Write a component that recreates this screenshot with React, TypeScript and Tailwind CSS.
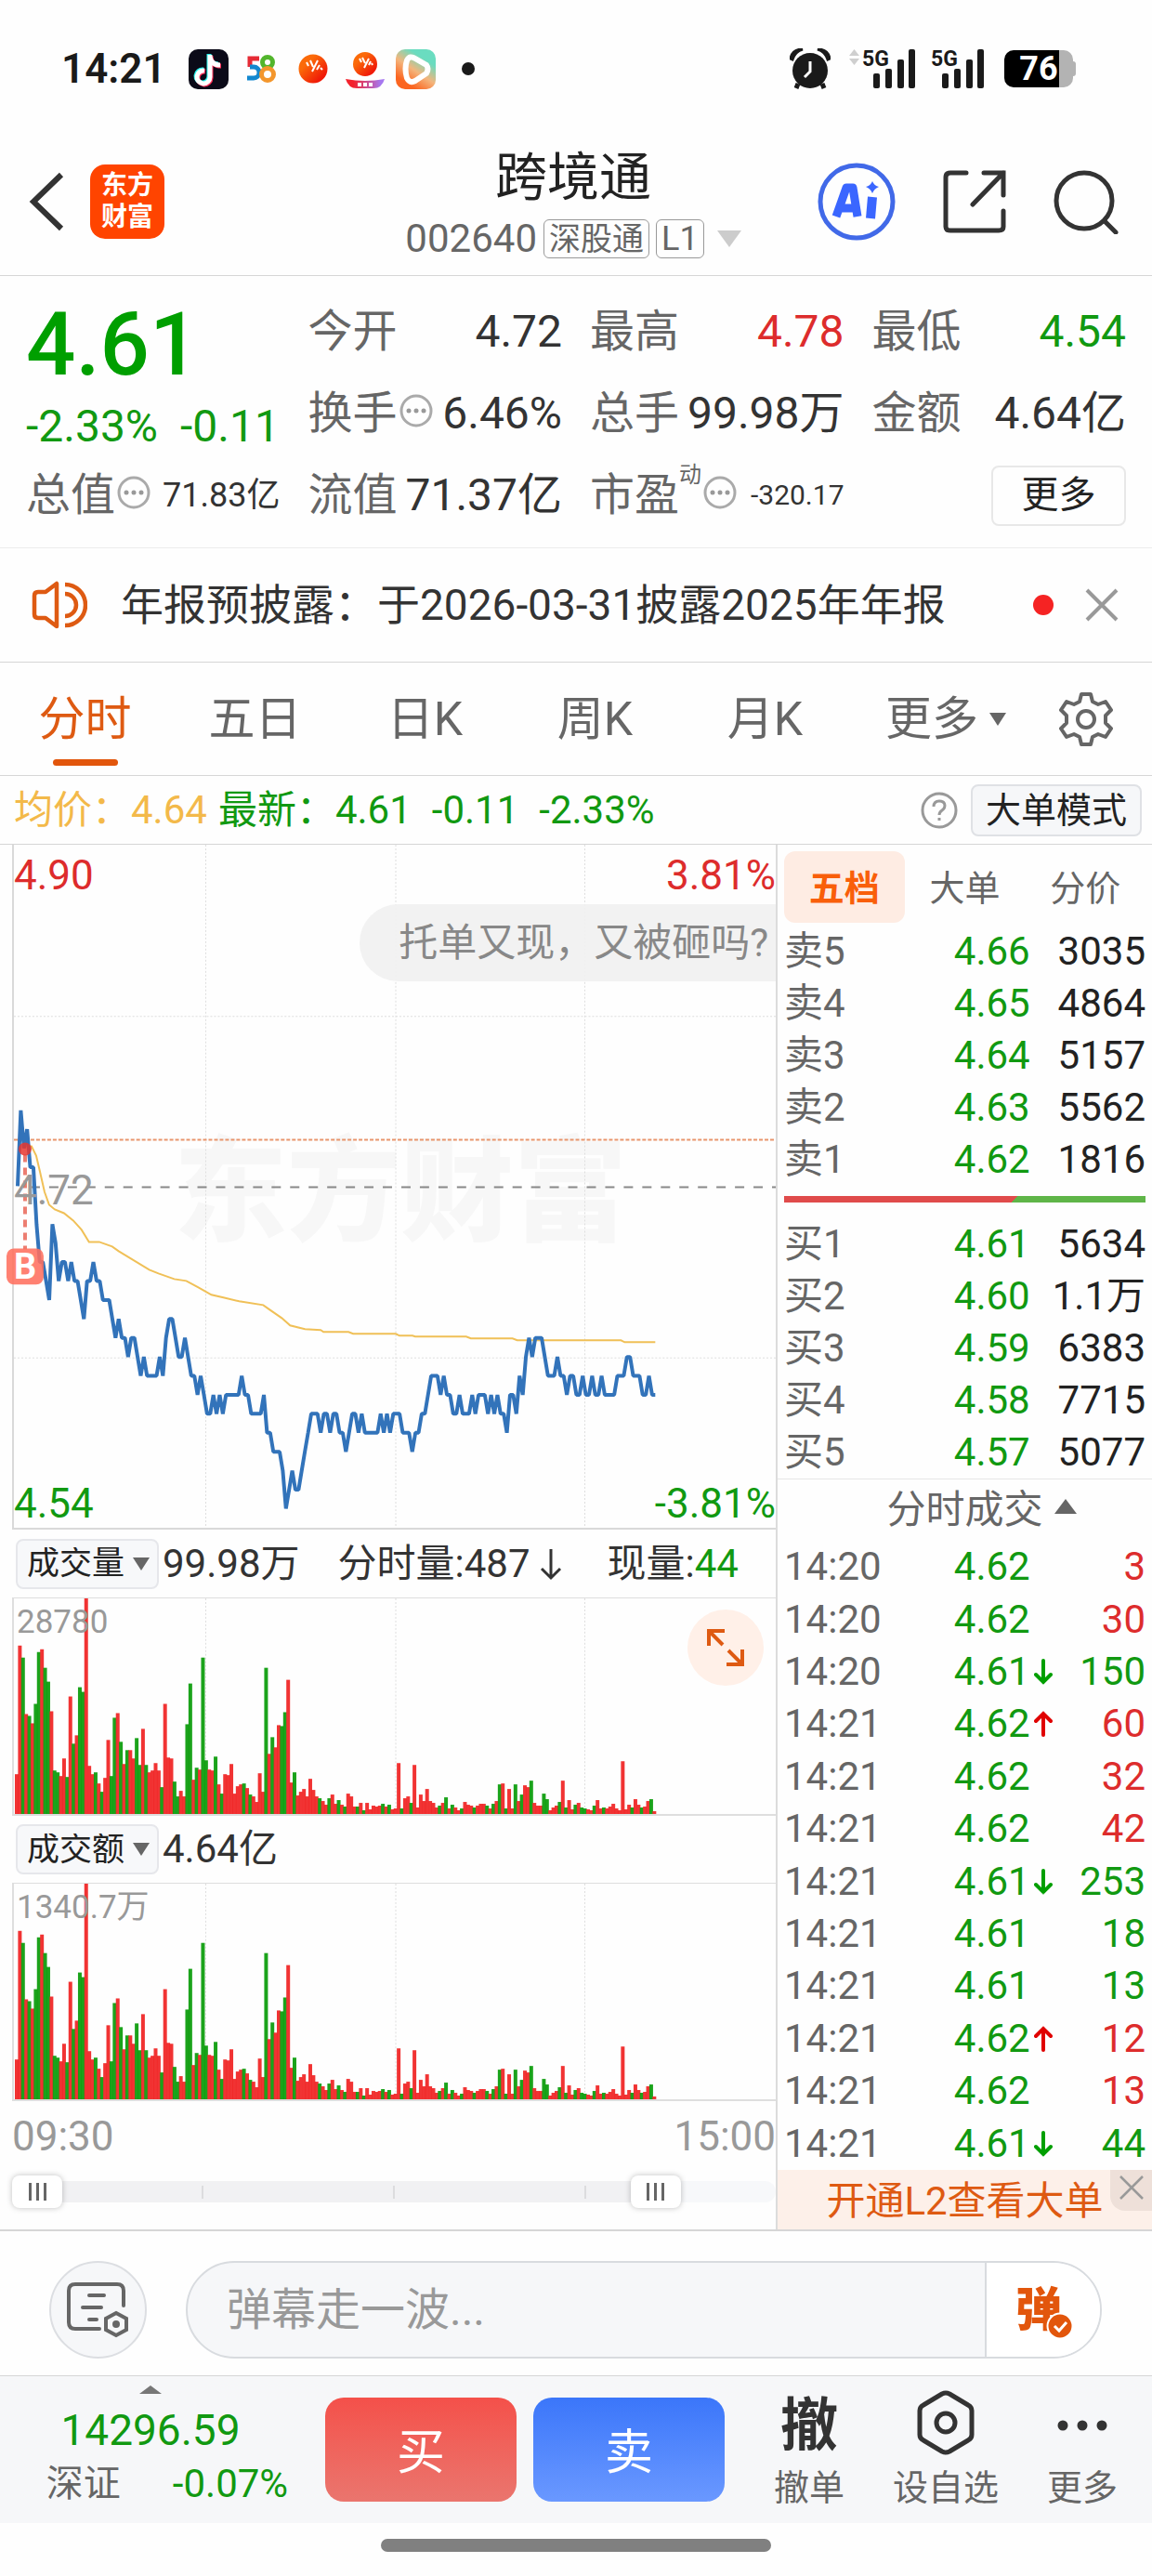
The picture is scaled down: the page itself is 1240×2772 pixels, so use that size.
import { useState } from "react";
import clsx from "clsx";

// price per minute, in cents above 4.50
const PRICES = [
  22, 26, 24, 25, 23, 23, 20, 18, 18, 17, 16, 20, 19, 17, 18, 18, 17, 18, 17, 17,
  16, 15, 17, 17, 18, 17, 17, 16, 16, 16, 15, 14, 15, 14, 14, 13, 14, 14, 13, 12,
  13, 12, 12, 12, 12, 13, 12, 14, 15, 15, 14, 13, 13, 14, 13, 12, 12, 11, 12, 11,
  10, 10, 11, 10, 11, 10, 11, 11, 11, 11, 11, 12, 11, 11, 10, 10, 10, 10, 11, 9,
  9, 8, 8, 8, 7, 5, 6, 7, 6, 6, 7, 8, 9, 10, 10, 10, 9, 10, 10, 9,
  10, 10, 9, 9, 8, 9, 10, 10, 9, 10, 9, 9, 9, 9, 9, 10, 9, 10, 9, 10,
  10, 10, 9, 9, 9, 8, 9, 9, 10, 10, 11, 12, 12, 12, 11, 12, 11, 11, 10, 10,
  11, 10, 10, 10, 11, 10, 11, 11, 11, 10, 11, 10, 11, 10, 10, 9, 11, 11, 10, 12,
  11, 13, 14, 13, 14, 14, 14, 13, 12, 12, 12, 13, 12, 12, 11, 12, 12, 11, 11, 12,
  11, 11, 12, 11, 11, 12, 11, 11, 11, 11, 12, 12, 12, 13, 13, 12, 12, 12, 11, 11,
  12, 11, 11,
];

// volume per minute, negative = sell side
const VOLUMES = [
  43, 182, -169, 108, -106, 98, -119, -175, 178, -158, -143, 111, -47, -45, 41, 60, -40, 127, -76, 85,
  -137, -132, 233, 52, 43, -45, 33, -24, 39, 80, -41, -104, 109, -78, 54, -69, 69, 60, -82, -53,
  92, -53, 45, 47, 55, 47, -29, 119, 61, 60, -35, -19, 25, 19, -97, -141, 37, -50, 48, -169,
  -58, 48, 47, -62, 32, -22, 43, 42, 54, 22, 30, 32, -33, 28, -21, 19, 13, 44, 24, -158,
  65, -83, 72, 96, -95, -110, 145, 34, -45, 20, 24, 27, 19, 38, 26, 19, -17, 14, 10, -17,
  21, 11, -15, 10, -8, 22, 19, 8, -8, 12, -4, 12, 5, 9, 8, 9, -11, 8, -10, 5,
  6, 55, -6, 17, 19, -12, 53, 7, 21, 14, 27, 14, 12, 7, -9, 12, -18, 6, -10, 7,
  4, -6, 13, 10, 9, -7, 9, 11, 11, -9, 6, -11, 14, -32, 33, -6, 27, 6, -32, 14,
  -21, 31, 29, -36, 12, 9, 9, -22, -16, 4, 7, 9, -13, 36, -7, 15, 5, -10, 12, -7,
  -6, 5, 4, -9, 15, 6, -7, 6, 8, 11, 6, 4, 57, 5, 10, -7, 16, 10, -7, 8,
  14, -16, 3,
];

const AVERAGE =
  "12,325 19,325 24,335 28,352 33,374 38,388 44,393 54,397 64,405 73,415 81,428 92,428 106,433 113,438 146,458 156,462 173,468 186,470 199,477 213,485 226,488 243,492 269,496 276,501 289,510 298,518 314,522 331,523 334,525 361,525 366,527 412,527 416,529 430,529 433,530 488,530 493,532 538,532 543,534 655,534 659,536 692,536";

const STEP = 3.406;

const SELLS = [
  ["卖5", "4.66", "3035"],
  ["卖4", "4.65", "4864"],
  ["卖3", "4.64", "5157"],
  ["卖2", "4.63", "5562"],
  ["卖1", "4.62", "1816"],
];

const BUYS = [
  ["买1", "4.61", "5634"],
  ["买2", "4.60", "1.1万"],
  ["买3", "4.59", "6383"],
  ["买4", "4.58", "7715"],
  ["买5", "4.57", "5077"],
];

type Trade = { time: string; price: string; dir?: "up" | "down"; qty: string; buy: boolean };

const TRADES: Trade[] = [
  { time: "14:20", price: "4.62", qty: "3", buy: true },
  { time: "14:20", price: "4.62", qty: "30", buy: true },
  { time: "14:20", price: "4.61", dir: "down", qty: "150", buy: false },
  { time: "14:21", price: "4.62", dir: "up", qty: "60", buy: true },
  { time: "14:21", price: "4.62", qty: "32", buy: true },
  { time: "14:21", price: "4.62", qty: "42", buy: true },
  { time: "14:21", price: "4.61", dir: "down", qty: "253", buy: false },
  { time: "14:21", price: "4.61", qty: "18", buy: false },
  { time: "14:21", price: "4.61", qty: "13", buy: false },
  { time: "14:21", price: "4.62", dir: "up", qty: "12", buy: true },
  { time: "14:21", price: "4.62", qty: "13", buy: true },
  { time: "14:21", price: "4.61", dir: "down", qty: "44", buy: false },
];

const TABS = ["分时", "五日", "日K", "周K", "月K"];

function Signal({ arrows }: { arrows?: boolean }) {
  return (
    <svg viewBox="0 0 72 52" className="h-[52px] w-[72px] overflow-visible" fill="#1a1a1a">
      {arrows && (
        <g fill="#cfcfcf">
          <path d="M0 12 L5.5 5 L11 12z" />
          <path d="M0 15 L11 15 L5.5 22z" />
        </g>
      )}
      <text x="14" y="23" fontSize="23" fontWeight="700" fontFamily="Roboto">5G</text>
      <rect x="26" y="31" width="7" height="16" rx="2" />
      <rect x="39" y="26" width="7" height="21" rx="2" />
      <rect x="52" y="16" width="7" height="31" rx="2" />
      <rect x="64" y="5" width="7" height="42" rx="2" />
    </svg>
  );
}

function StatusBar() {
  return (
    <div className="flex h-[148px] items-center justify-between pr-[82px] pl-[66px]">
      <div className="flex items-center">
        <span className="mr-6 text-[44px] leading-none font-semibold text-[#1a1a1a]">14:21</span>
        <svg viewBox="0 0 43 43" className="mr-[19px] size-[43px]">
          <rect width="43" height="43" rx="10" fill="#0b0a18" />
          <g fill="none" strokeWidth="5">
            <path d="M22 5v24a7 7 0 1 1-6-7M22 7c1 6 5 9 10 9" stroke="#25f4ee" />
            <path d="M24 7v24a7 7 0 1 1-6-7M24 9c1 6 5 9 11 9" stroke="#fe2c55" />
            <path d="M23 6v24a7 7 0 1 1-6-7M23 8c1 6 5 9 11 9" stroke="#fff" />
          </g>
        </svg>
        <svg viewBox="0 0 32 30" className="mr-6 h-[30px] w-8" fill="none" strokeWidth="5">
          <path d="M14 4H4v9" stroke="#e62b35" />
          <path d="M4 13h4a6 6 0 0 1 0 12H1" stroke="#1287cf" />
          <circle cx="23" cy="8" r="5.5" stroke="#52b52c" />
          <circle cx="23" cy="21" r="6.5" stroke="#f3962c" />
        </svg>
        <svg viewBox="0 0 32 32" className="mr-[19px] size-8">
          <defs>
            <linearGradient id="ball" x1="0" y1="0" x2="1" y2="1">
              <stop offset="0.3" stopColor="#fb6a09" />
              <stop offset="0.8" stopColor="#f01a08" />
            </linearGradient>
          </defs>
          <circle cx="16" cy="16" r="15.5" fill="url(#ball)" />
          <path d="M9 9l2 4M13 7l3 7M15 19l6-12M20 17l3-5M24 15l2 2" stroke="#fff" strokeWidth="2" />
        </svg>
        <svg viewBox="0 0 42 42" className="mr-3 size-[42px]">
          <defs>
            <linearGradient id="ribbon">
              <stop offset="0.2" stopColor="#f3222d" />
              <stop offset="0.9" stopColor="#a678f0" />
            </linearGradient>
          </defs>
          <circle cx="21" cy="16" r="13" fill="url(#ball)" />
          <path d="M15 10l2 4M18 9l3 6M20 20l5-10M25 17l2-4M28 15l1 2" stroke="#fff" strokeWidth="2" />
          <path d="M0 32q21 4 42 0q-3 10-12 10H12Q3 42 0 32z" fill="url(#ribbon)" />
          <path d="M13 38h16" stroke="#fff" strokeWidth="4" strokeDasharray="4 2" />
        </svg>
        <svg viewBox="0 0 43 43" className="mr-7 size-[43px]">
          <defs>
            <linearGradient id="play" x1="0.9" y1="0.1" x2="0.3" y2="1">
              <stop offset="0.2" stopColor="#6adcc0" />
              <stop offset="0.55" stopColor="#f4b57c" />
              <stop offset="0.9" stopColor="#fb6520" />
            </linearGradient>
          </defs>
          <rect width="43" height="43" rx="10" fill="url(#play)" />
          <path d="M12 12Q15 6 21 10L33 17Q36 21 33 26L21 34Q15 37 12 31Q9 21 12 12z" fill="none" stroke="#fff" strokeWidth="6" />
        </svg>
        <span className="size-3.5 rounded-full bg-[#1a1a1a]" />
      </div>
      <div className="flex items-center">
        <svg viewBox="0 0 44 44" className="mr-5 size-11" fill="#1a1a1a">
          <circle cx="22" cy="24" r="19" />
          <path d="M1 11Q3 1 14 1Q6 3 3 12zM43 11Q41 1 30 1Q38 3 41 12z" stroke="#1a1a1a" strokeWidth="3" />
          <path d="M9 38l-2 5M35 38l2 5" stroke="#1a1a1a" strokeWidth="5" />
          <path d="M22 14v11l-6 6" fill="none" stroke="#fff" strokeWidth="3" />
        </svg>
        <div className="flex items-center gap-0.5">
          <Signal arrows />
          <Signal />
        </div>
        <div className="ml-[21px] flex items-center">
          <div className="flex h-10 w-[74px] items-center justify-center overflow-hidden rounded-[10px] bg-[linear-gradient(90deg,#000_80%,#b3b3b3_80%)] text-[36px] leading-none font-bold text-white">
            76
          </div>
          <span className="h-4 w-[3px] rounded-r bg-[#b3b3b3]" />
        </div>
      </div>
    </div>
  );
}

function Header() {
  return (
    <header className="grid h-[149px] grid-cols-[1fr_auto_1fr] items-center border-b border-[#d6d6d6] pr-9 pb-2.5 pl-[30px]">
      <div className="flex items-center gap-7">
        <button aria-label="返回">
          <svg viewBox="0 0 39 64" className="h-16 w-[39px]" fill="none" stroke="#333" strokeWidth="6">
            <path d="M36 3L6 32l30 29" />
          </svg>
        </button>
        <a href="#home" className="flex size-20 flex-col items-center justify-center rounded-2xl bg-[#ff4400] text-[28px] leading-[34px] font-bold text-white">
          <span>东方</span>
          <span>财富</span>
        </a>
      </div>
      <div className="flex flex-col items-center gap-2.5">
        <h1 className="text-[56px] leading-[70px] text-[#222]">跨境通</h1>
        <div className="flex items-center text-[#666]">
          <span className="mr-[7px] text-[42px] leading-none">002640</span>
          <span className="mr-[7px] rounded-md border border-[#999] px-[5px] text-[34px] leading-10">深股通</span>
          <span className="rounded-md border border-[#999] px-[5px] text-[36px] leading-10">L1</span>
          <button aria-label="切换股票" className="ml-3.5">
            <svg viewBox="0 0 26 18" className="h-[18px] w-[26px]" fill="#ccc">
              <path d="M0 0h26L13 18z" />
            </svg>
          </button>
        </div>
      </div>
      <div className="flex items-center justify-end gap-[51px]">
        <button aria-label="AI">
          <svg viewBox="0 0 84 84" className="size-[84px]">
            <circle cx="42" cy="42" r="39" fill="none" stroke="#4169e8" strokeWidth="5" />
            <g fill="none" stroke="#3a66ff" strokeWidth="9" strokeLinejoin="round">
              <path d="M20 58L31 27h7l5 31M26 49h14" />
              <path d="M59 37l-2 23" strokeWidth="10" />
            </g>
            <path d="M59 20q2 5 7 6q-5 2-7 7q-2-5-7-7q5-1 7-6z" fill="#3a66ff" />
          </svg>
        </button>
        <button aria-label="分享">
          <svg viewBox="0 0 68 68" className="size-[68px]" fill="none" stroke="#333" strokeWidth="5" strokeLinecap="round">
            <path d="M25 3H8Q3 3 3 8v53q0 4 5 4h52q5 0 5-4V44M44 3h21v24M65 3L32 37" />
          </svg>
        </button>
        <button aria-label="搜索">
          <svg viewBox="0 0 70 70" className="size-[70px]" fill="none" stroke="#333" strokeWidth="5" strokeLinecap="round">
            <circle cx="33" cy="34" r="30" />
            <path d="M55 56l12 12" />
          </svg>
        </button>
      </div>
    </header>
  );
}

function Dots() {
  return (
    <svg viewBox="0 0 36 36" className="mb-1.5 size-9 shrink-0" fill="#999">
      <circle cx="18" cy="18" r="16" fill="none" stroke="#aaa" strokeWidth="3" />
      <circle cx="10" cy="18" r="2.5" />
      <circle cx="18" cy="18" r="2.5" />
      <circle cx="26" cy="18" r="2.5" />
    </svg>
  );
}

function Quote({ label, value, dots, color = "text-[#333]", small }: {
  label: string;
  value: string;
  dots?: boolean;
  color?: string;
  small?: boolean;
}) {
  return (
    <div className="flex h-[88px] items-center justify-between whitespace-nowrap">
      <span className="flex items-center gap-0.5 text-[48px] leading-none text-[#666]">
        {label}
        {dots && <Dots />}
      </span>
      <span className={clsx("leading-none", small ? "text-[36px]" : "text-[48px]", color)}>{value}</span>
    </div>
  );
}

function QuotePanel() {
  return (
    <section className="grid h-[293px] grid-cols-4 gap-x-[30px] border-b border-[#ececec] px-7 pt-4">
      <div>
        <div className="flex h-[116px] items-center text-[94px] leading-none font-medium text-[#009f00]">4.61</div>
        <div className="flex h-[60px] items-center gap-6 text-[48px] leading-none text-[#119911]">
          <span>-2.33%</span>
          <span>-0.11</span>
        </div>
        <Quote label="总值" value="71.83亿" dots small />
      </div>
      <div>
        <Quote label="今开" value="4.72" />
        <Quote label="换手" value="6.46%" dots />
        <Quote label="流值" value="71.37亿" />
      </div>
      <div>
        <Quote label="最高" value="4.78" color="text-[#dd2c2c]" />
        <Quote label="总手" value="99.98万" />
        <div className="flex h-[88px] items-center justify-between">
          <span className="flex items-center text-[48px] leading-none text-[#666]">
            市盈
            <span className="mr-0.5 mb-11 text-[24px] leading-none">动</span>
            <Dots />
          </span>
          <span className="text-[30px] leading-none text-[#333]">-320.17</span>
        </div>
      </div>
      <div>
        <Quote label="最低" value="4.54" color="text-[#119911]" />
        <Quote label="金额" value="4.64亿" />
        <div className="flex h-[88px] items-center justify-end">
          <button className="h-[65px] w-[145px] rounded-lg border-2 border-[#e8e8e8] text-[40px] leading-none text-[#222]">更多</button>
        </div>
      </div>
    </section>
  );
}

function Notice() {
  return (
    <div className="flex h-[123px] items-center border-b border-[#d6d6d6] pr-9 pl-[34px]">
      <svg viewBox="0 0 60 54" className="mr-9 h-[54px] w-[60px]" fill="none" stroke="#de5a12" strokeWidth="4.5" strokeLinejoin="round">
        <path d="M27 4v46L15 41H7q-4 0-4-4V17q0-4 4-4h8z" />
        <path d="M36 5a22 22 0 0 1 0 44M36 15a12 12 0 0 1 0 24" />
      </svg>
      <p className="flex-1 text-[46px] leading-none whitespace-nowrap text-[#333]">年报预披露：于2026-03-31披露2025年年报</p>
      <span className="mr-[34px] size-[22px] rounded-full bg-[#f52323]" />
      <button aria-label="关闭">
        <svg viewBox="0 0 36 36" className="size-9" fill="none" stroke="#999" strokeWidth="4">
          <path d="M2 2l32 32M34 2L2 34" />
        </svg>
      </button>
    </div>
  );
}

function PeriodTabs() {
  const [active, setActive] = useState("分时");

  return (
    <nav className="grid h-[122px] grid-cols-[183fr_183fr_183fr_183fr_183fr_206fr_95fr] items-stretch border-b border-[#d6d6d6] pr-6 text-[50px] leading-none text-[#666]">
      {TABS.map((tab) => (
        <button
          key={tab}
          onClick={() => setActive(tab)}
          className={clsx("relative", active === tab && "text-[#de5a12]")}
        >
          {tab}
          {active === tab && <span className="absolute bottom-2.5 left-1/2 h-[7px] w-[70px] -translate-x-1/2 rounded-full bg-[#e2560c]" />}
        </button>
      ))}
      <button className="flex items-center justify-center gap-3">
        更多
        <svg viewBox="0 0 18 14" className="h-3.5 w-[18px]" fill="#666">
          <path d="M0 0h18L9 14z" />
        </svg>
      </button>
      <button aria-label="设置" className="flex items-center justify-center">
        <svg viewBox="0 0 60 60" className="size-[60px]" fill="none" stroke="#666" strokeWidth="4" strokeLinejoin="round">
          <path d="M25 3h10l2 8l6 3l8-3l6 9l-6 6v8l6 6l-6 9l-8-3l-6 3l-2 8H25l-2-8l-6-3l-8 3l-6-9l6-6v-8l-6-6l6-9l8 3l6-3z" />
          <circle cx="30" cy="30" r="9" />
        </svg>
      </button>
    </nav>
  );
}

function InfoRow() {
  return (
    <div className="flex h-[74px] items-center border-b border-[#d6d6d6] pr-[11px] pl-[15px] text-[42px] leading-none whitespace-nowrap text-[#119911]">
      <span className="mr-3 text-[#f3b94a]">均价：4.64</span>
      <span className="mr-[22px]">最新：4.61</span>
      <span className="mr-[22px]">-0.11</span>
      <span>-2.33%</span>
      <button aria-label="帮助" className="mr-[14px] ml-auto">
        <svg viewBox="0 0 40 40" className="size-10" fill="none" stroke="#999" strokeWidth="3">
          <circle cx="20" cy="20" r="18" />
          <path d="M14 16q0-6 6-6t6 5q0 3-3 5t-3 5M20 28v3" />
        </svg>
      </button>
      <button className="h-14 rounded-lg border-2 border-[#dfe1e5] bg-[#f6f7f9] px-[14px] text-[38px] leading-none text-[#222]">大单模式</button>
    </div>
  );
}

function PriceChart() {
  const points = PRICES.map((p, i) => `${(4 + i * STEP).toFixed(1)},${((40 - p) * 20.44).toFixed(1)}`).join(" ");

  return (
    <div className="relative h-[737px] border-b-2 border-l-2 border-[#d9d9d9] text-[44px] leading-none">
      <span className="absolute top-[314px] left-[172px] text-[122px] leading-none font-black whitespace-nowrap text-[#f7f7f7]">东方财富</span>
      <svg viewBox="0 0 822 736" preserveAspectRatio="none" className="absolute inset-0 h-full w-full overflow-visible" fill="none">
        <g stroke="#dedede" strokeWidth="1" strokeDasharray="2 2">
          <path d="M207 0v736M412 0v736M616 0v736M0 185h822M0 553h822" />
        </g>
        <path d="M0 318h822" stroke="#e8956c" strokeWidth="2" strokeDasharray="4 2" />
        <path d="M18 369h804" stroke="#888" strokeWidth="2" strokeDasharray="10 10" />
        <polyline points={AVERAGE} stroke="#f0c057" strokeWidth="2" />
        <polyline points={points} stroke="#3273ba" strokeWidth="4" strokeLinejoin="bevel" />
        <path d="M12 334v102" stroke="#ec7d70" strokeWidth="4" strokeDasharray="8 6" />
        <circle cx="12" cy="328" r="7" fill="#e5362f" fillOpacity="0.85" />
        <rect x="-8" y="435" width="40" height="39" rx="8" fill="#ff6f5f" fillOpacity="0.88" />
        <text x="12" y="468" fontSize="38" fontWeight="700" textAnchor="middle" fill="#fff" fontFamily="Roboto">B</text>
      </svg>
      <span className="absolute top-[11px] left-0 text-[#dd2c2c]">4.90</span>
      <span className="absolute top-[11px] right-0 text-[#dd2c2c]">3.81%</span>
      <span className="absolute top-[350px] left-0 text-[#999]">4.72</span>
      <span className="absolute bottom-1 left-0 text-[#119911]">4.54</span>
      <span className="absolute right-0 bottom-1 text-[#119911]">-3.81%</span>
      <div className="absolute top-16 right-0 flex h-[83px] items-center rounded-l-full bg-[#f1f1f1]/90 pr-2 pl-[42px] text-[42px] leading-none whitespace-nowrap text-[#888]">
        托单又现，又被砸吗?
      </div>
    </div>
  );
}

function BarChart({ max, children }: { max: string; children?: React.ReactNode }) {
  return (
    <div className="relative h-[235px] border-t border-b-2 border-l-2 border-[#dedede]">
      <svg viewBox="0 0 822 233" preserveAspectRatio="none" className="absolute inset-0 h-full w-full">
        <path d="M207 0v233M412 0v233M616 0v233" stroke="#dedede" strokeDasharray="2 2" />
        {VOLUMES.map((v, i) => (
          <rect
            key={i}
            x={1 + i * STEP}
            y={233 - Math.abs(v)}
            width="4"
            height={Math.abs(v)}
            fill={v > 0 ? "#f02222" : "#089b08"}
            fillOpacity="0.92"
          />
        ))}
      </svg>
      <span className="absolute top-2 left-[3px] text-[35px] leading-none text-[#999]">{max}</span>
      {children}
    </div>
  );
}

function IndicatorSelect({ name }: { name: string }) {
  return (
    <label className="relative ml-1 flex items-center">
      <select
        aria-label="指标"
        defaultValue={name}
        className="h-[54px] w-[154px] appearance-none rounded-lg border-2 border-[#e6e7eb] bg-[#f7f8fa] pl-2.5 text-[35px] leading-none text-[#222]"
      >
        <option>{name}</option>
      </select>
      <svg viewBox="0 0 18 14" className="pointer-events-none absolute right-2.5 h-3.5 w-[18px]" fill="#666">
        <path d="M0 0h18L9 14z" />
      </svg>
    </label>
  );
}

const RANGE =
  "pointer-events-none absolute inset-0 h-full w-full appearance-none bg-transparent [&::-webkit-slider-thumb]:pointer-events-auto [&::-webkit-slider-thumb]:h-[35px] [&::-webkit-slider-thumb]:w-[54px] [&::-webkit-slider-thumb]:appearance-none [&::-webkit-slider-thumb]:rounded-lg [&::-webkit-slider-thumb]:bg-white [&::-webkit-slider-thumb]:bg-[linear-gradient(90deg,#666_3px,transparent_3px_8px,#666_8px_11px,transparent_11px_16px,#666_16px)] [&::-webkit-slider-thumb]:bg-[length:19px_19px] [&::-webkit-slider-thumb]:bg-center [&::-webkit-slider-thumb]:bg-no-repeat [&::-webkit-slider-thumb]:shadow-[0_0_6px_rgba(0,0,0,0.25)]";

function TimeRange() {
  return (
    <div className="relative h-[35px]">
      <div className="absolute inset-x-0 top-1.5 flex h-[23px] items-center justify-evenly rounded-full bg-[linear-gradient(90deg,#f1f1f3_84%,#f7f8fa_84%)]">
        <span className="h-3.5 w-0.5 bg-[#dcdcde]" />
        <span className="h-3.5 w-0.5 bg-[#dcdcde]" />
        <span className="h-3.5 w-0.5 bg-[#dcdcde]" />
      </div>
      <input type="range" aria-label="开始时间" min={0} max={1000} defaultValue={0} className={RANGE} />
      <input type="range" aria-label="结束时间" min={0} max={1000} defaultValue={867} className={RANGE} />
    </div>
  );
}

function Charts() {
  return (
    <div className="min-w-0 flex-1 border-r-2 border-[#dcdcdc] pl-[13px]">
      <PriceChart />
      <div className="flex h-[73px] items-center text-[42px] leading-none whitespace-nowrap text-[#333]">
        <IndicatorSelect name="成交量" />
        <span className="ml-1">99.98万</span>
        <span className="ml-[41px]">分时量:487</span>
        <svg viewBox="0 0 24 36" className="ml-2.5 h-9 w-6" fill="none" stroke="#333" strokeWidth="3">
          <path d="M12 2v31M2 23l10 10l10-10" />
        </svg>
        <span className="ml-[49px]">
          现量:<span className="text-[#119911]">44</span>
        </span>
      </div>
      <BarChart max="28780">
        <button aria-label="全屏" className="absolute top-3 right-[13px] flex size-[82px] items-center justify-center rounded-full bg-[#fff0e8]">
          <svg viewBox="0 0 40 40" className="size-10" fill="none" stroke="#de5a12" strokeWidth="4">
            <path d="M2 18V2h17M2 2l15 15M38 22v16H21M38 38L23 23" />
          </svg>
        </button>
      </BarChart>
      <div className="flex h-[72px] items-center text-[42px] leading-none text-[#333]">
        <IndicatorSelect name="成交额" />
        <span className="ml-1">4.64亿</span>
      </div>
      <BarChart max="1340.7万" />
      <div className="flex h-20 items-center justify-between pb-1 text-[44px] leading-none text-[#999]">
        <span>09:30</span>
        <span>15:00</span>
      </div>
      <TimeRange />
    </div>
  );
}

function Depth({ rows }: { rows: string[][] }) {
  return (
    <table className="w-full table-fixed text-[42px] leading-none">
      <tbody>
        {rows.map(([label, price, qty]) => (
          <tr key={label} className="h-14">
            <th scope="row" className="w-[47%] p-0 text-left font-normal text-[#666]">{label}</th>
            <td className="w-[22%] p-0 text-[#119911]">{price}</td>
            <td className="p-0 text-right text-[#222]">{qty}</td>
          </tr>
        ))}
      </tbody>
    </table>
  );
}

function OrderBook() {
  return (
    <aside className="flex w-[32.5%] flex-col">
      <div className="grid grid-cols-3 px-[7px] pt-[7px] text-[38px] leading-none text-[#666]">
        <button className="h-[77px] rounded-xl bg-[#feece3] pt-0.5 font-bold text-[#f95f0a]">五档</button>
        <button className="pt-0.5">大单</button>
        <button className="pt-0.5">分价</button>
      </div>
      <div className="px-[7px] pt-[3px]">
        <Depth rows={SELLS} />
        <div className="mt-[11px] mb-[17px] h-[7px] bg-[linear-gradient(135deg,#e04b4b_63.5%,#5fb548_63.5%)]" />
        <Depth rows={BUYS} />
      </div>
      <button className="flex h-[67px] items-center justify-center gap-3 border-t border-[#e6e6e6] pl-9 text-[42px] leading-none text-[#666]">
        分时成交
        <svg viewBox="0 0 24 16" className="mb-2 h-4 w-6" fill="#666">
          <path d="M0 16h24L12 0z" />
        </svg>
      </button>
      <table className="mx-[7px] h-[677px] table-fixed text-[42px] leading-none">
        <tbody>
          {TRADES.map((t, i) => (
            <tr key={i} className="h-14">
              <td className="w-[47%] p-0 text-[#666]">{t.time}</td>
              <td className="w-[28%] p-0 text-[#119911]">
                <span className="flex items-center gap-1">
                  {t.price}
                  {t.dir && (
                    <svg
                      viewBox="0 0 20 28"
                      className="h-7 w-5"
                      fill="none"
                      stroke={t.dir === "up" ? "#e00000" : "#009f00"}
                      strokeWidth="4"
                      strokeLinecap="round"
                    >
                      <path d={t.dir === "up" ? "M10 26V3M2 11l8-8l8 8" : "M10 2v23M2 17l8 8l8-8"} />
                    </svg>
                  )}
                </span>
              </td>
              <td className={clsx("p-0 text-right", t.buy ? "text-[#dd2c2c]" : "text-[#119911]")}>{t.qty}</td>
            </tr>
          ))}
        </tbody>
      </table>
      <div className="relative flex flex-1 items-center justify-center bg-[#fdf0e9]">
        <a href="#l2" className="pt-1 text-[42px] leading-[60px] text-[#de5a12]">开通L2查看大单</a>
        <button aria-label="关闭广告" className="absolute top-0 right-0 flex h-11 w-[45px] items-start justify-center rounded-bl-2xl bg-[#eee0d9] pt-1.5">
          <svg viewBox="0 0 26 26" className="size-[26px]" fill="none" stroke="#999" strokeWidth="2.5">
            <path d="M1 1l24 24M25 1L1 25" />
          </svg>
        </button>
      </div>
    </aside>
  );
}

function CommentBar() {
  return (
    <div className="flex h-[156px] items-center gap-[42px] border-b border-[#d6d6d6] pt-3.5 pr-[54px] pl-[53px]">
      <button aria-label="弹幕设置" className="flex size-[105px] shrink-0 items-center justify-center rounded-full border-2 border-[#dcdee2] bg-[#f6f7f9]">
        <svg viewBox="0 0 68 60" className="h-[60px] w-[68px]" fill="none" stroke="#666" strokeWidth="4" strokeLinecap="round">
          <path d="M61 25V9q0-7-7-7H9Q2 2 2 9v34q0 7 7 7h26" />
          <path d="M24 14h16M17 27h20M24 40h8" />
          <path d="M53 33l11 6v12l-11 6l-11-6V39z" />
          <circle cx="53" cy="45" r="2" />
        </svg>
      </button>
      <div className="flex h-[105px] flex-1 overflow-hidden rounded-full border-2 border-[#d8dbdf] bg-[#f6f7f9]">
        <input
          type="text"
          aria-label="弹幕"
          placeholder="弹幕走一波..."
          className="min-w-0 flex-1 pl-[42px] text-[48px] placeholder:text-[#999] focus:outline-none"
        />
        <button aria-label="弹幕开关" className="relative w-[124px] border-l-2 border-[#d8dbdf] bg-white pr-2.5 text-[50px] leading-none font-black text-[#e2560c]">
          弹
          <svg viewBox="0 0 30 30" className="absolute right-7 bottom-[18px] size-[30px]">
            <circle cx="15" cy="15" r="13.5" fill="#e2560c" stroke="#fff" strokeWidth="2" />
            <path d="M9 15l5 5l8-9" fill="none" stroke="#fff" strokeWidth="3" />
          </svg>
        </button>
      </div>
    </div>
  );
}

function TradeBar() {
  return (
    <footer className="flex h-[158px] bg-[#f6f7f9]">
      <a href="#index" className="flex w-[324px] flex-col items-center pt-2.5 leading-none text-[#119911]">
        <svg viewBox="0 0 24 9" className="h-[9px] w-6" fill="#777">
          <path d="M0 9h24L12 0z" />
        </svg>
        <span className="mt-4 text-[46px]">14296.59</span>
        <span className="mt-3.5 flex items-center gap-14 pl-9">
          <span className="text-[40px] text-[#666]">深证</span>
          <span className="text-[42px]">-0.07%</span>
        </span>
      </a>
      <div className="flex flex-1 gap-[18px] pt-[23px] pl-[26px] text-[52px] leading-none text-white">
        <button className="h-28 flex-1 rounded-[20px] bg-linear-to-b from-[#f4504a] to-[#ea756e] pt-2">买</button>
        <button className="h-28 flex-1 rounded-[20px] bg-linear-to-b from-[#3b76fa] to-[#6a98ff] pt-2">卖</button>
      </div>
      <div className="flex w-[460px] justify-between pr-[37px] pl-[53px] text-[38px] leading-none text-[#666]">
        <button className="flex flex-col items-center pt-[15px]">
          <span className="flex h-[72px] items-center pt-1.5 text-[62px] leading-none font-bold text-[#333]">撤</span>
          <span className="mt-3.5">撤单</span>
        </button>
        <button className="flex flex-col items-center pt-[15px]">
          <svg viewBox="0 0 64 72" className="h-[72px] w-16" fill="none" stroke="#333" strokeWidth="5" strokeLinejoin="round">
            <path d="M28 4q4-2 8 0l20 12q4 2 4 6v26q0 4-4 6L36 66q-4 2-8 0L8 54q-4-2-4-6V22q0-4 4-6z" />
            <circle cx="32" cy="35" r="10" />
          </svg>
          <span className="mt-3.5">设自选</span>
        </button>
        <button className="flex flex-col items-center pt-[15px]">
          <svg viewBox="0 0 56 72" className="h-[72px] w-14" fill="#333">
            <circle cx="7" cy="38" r="5.5" />
            <circle cx="28" cy="38" r="5.5" />
            <circle cx="49" cy="38" r="5.5" />
          </svg>
          <span className="mt-3.5">更多</span>
        </button>
      </div>
    </footer>
  );
}

export default function App() {
  return (
    <div className="min-h-screen bg-[#fefefe] font-[Roboto,'Noto_Sans_CJK_SC',sans-serif]">
      <StatusBar />
      <Header />
      <QuotePanel />
      <Notice />
      <PeriodTabs />
      <InfoRow />
      <main className="flex border-b-2 border-[#d6d6d6]">
        <Charts />
        <OrderBook />
      </main>
      <CommentBar />
      <TradeBar />
      <div className="flex h-14 items-start justify-center pt-[17px]">
        <span className="h-3.5 w-[420px] rounded-full bg-[#808080]" />
      </div>
    </div>
  );
}
